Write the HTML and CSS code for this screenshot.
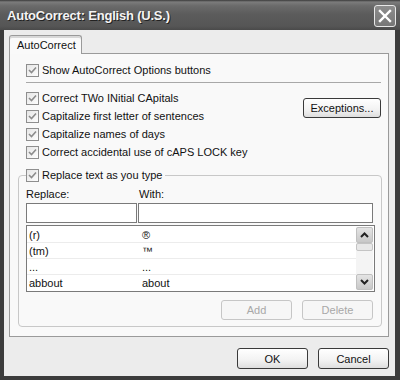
FILE: index.html
```html
<!DOCTYPE html>
<html>
<head>
<meta charset="utf-8">
<link rel="stylesheet" href="styles.css">
</head>
<body>
<div class="window">
  <div class="titlebar">
    <span class="title">AutoCorrect: English (U.S.)</span>
    <span class="close"><svg width="14" height="14" viewBox="0 0 14 14"><path d="M2 2 L12 12 M12 2 L2 12" stroke="#fff" stroke-width="2.4" stroke-linecap="square"/></svg></span>
  </div>
  <div class="client">
    <div class="tabs"><div class="tab">AutoCorrect</div></div>
    <div class="panel">
      <div class="check row1"><span class="box"><svg width="11" height="11" viewBox="0 0 11 11"><path d="M2 5 L4.5 7.5 L9 2.5" fill="none" stroke="#8c8c8c" stroke-width="1.6"/></svg></span>Show AutoCorrect Options buttons</div>
      <div class="sep"></div>
      <div class="opts">
        <div class="optlist">
          <div class="check"><span class="box"><svg width="11" height="11" viewBox="0 0 11 11"><path d="M2 5 L4.5 7.5 L9 2.5" fill="none" stroke="#8c8c8c" stroke-width="1.6"/></svg></span>Correct TWo INitial CApitals</div>
          <div class="check"><span class="box"><svg width="11" height="11" viewBox="0 0 11 11"><path d="M2 5 L4.5 7.5 L9 2.5" fill="none" stroke="#8c8c8c" stroke-width="1.6"/></svg></span>Capitalize first letter of sentences</div>
          <div class="check"><span class="box"><svg width="11" height="11" viewBox="0 0 11 11"><path d="M2 5 L4.5 7.5 L9 2.5" fill="none" stroke="#8c8c8c" stroke-width="1.6"/></svg></span>Capitalize names of days</div>
          <div class="check"><span class="box"><svg width="11" height="11" viewBox="0 0 11 11"><path d="M2 5 L4.5 7.5 L9 2.5" fill="none" stroke="#8c8c8c" stroke-width="1.6"/></svg></span>Correct accidental use of cAPS LOCK key</div>
        </div>
        <div class="btn exc">Exceptions...</div>
      </div>
      <div class="group">
        <div class="legend check"><span class="box"><svg width="11" height="11" viewBox="0 0 11 11"><path d="M2 5 L4.5 7.5 L9 2.5" fill="none" stroke="#8c8c8c" stroke-width="1.6"/></svg></span>Replace text as you type</div>
        <div class="labels"><span class="lbl-r">Replace:</span><span>With:</span></div>
        <div class="inputs"><div class="input in-r"></div><div class="input in-w"></div></div>
        <div class="list">
          <div class="rows">
            <div class="lrow"><span class="c1">(r)</span><span>®</span></div>
            <div class="lrow"><span class="c1">(tm)</span><span>™</span></div>
            <div class="lrow"><span class="c1">...</span><span>...</span></div>
            <div class="lrow"><span class="c1">abbout</span><span>about</span></div>
          </div>
          <div class="scroll">
            <div class="sbtn"><svg width="9" height="6" viewBox="0 0 9 6"><path d="M1 5 L4.5 1.5 L8 5" fill="none" stroke="#222" stroke-width="2"/></svg></div>
            <div class="thumb"></div>
            <div class="track"></div>
            <div class="sbtn"><svg width="9" height="6" viewBox="0 0 9 6"><path d="M1 1 L4.5 4.5 L8 1" fill="none" stroke="#222" stroke-width="2"/></svg></div>
          </div>
        </div>
        <div class="actions"><div class="btn dis">Add</div><div class="btn dis">Delete</div></div>
      </div>
    </div>
    <div class="footer"><div class="btn">OK</div><div class="btn">Cancel</div></div>
  </div>
</div>
</body>
</html>
```
FILE: styles.css
```css
html, body { margin: 0; padding: 0; }
body {
  background: #2b2b2b;
  font-family: "Liberation Sans", Arial, sans-serif;
  font-size: 11px;
  color: #111;
}
.window {
  width: 400px;
  height: 380px;
  background: #3c3c3c;
  display: flex;
  flex-direction: column;
}
.titlebar {
  height: 30px;
  flex: none;
  display: flex;
  align-items: center;
  justify-content: space-between;
  padding: 0 4px 0 7px;
  box-sizing: border-box;
  background: linear-gradient(#3a3a3a 0, #7c7c7c 2px, #6a6a6a 6px, #5c5c5c 14px, #565656 26px, #4a4a4a 30px);
}
.title {
  color: #f4f4f4;
  font-weight: bold;
  font-size: 13px;
  letter-spacing: -0.2px;
  text-shadow: 1px 1px 0 #222;
  margin-top: 1px;
}
.close {
  width: 20px;
  height: 20px;
  border: 1px solid #e8e8e8;
  border-radius: 3px;
  background: linear-gradient(#8d8d8d, #777);
  display: flex;
  align-items: center;
  justify-content: center;
  margin-top: 2px;
}
.client {
  flex: 1;
  margin: 0 5px 4px 4px;
  background: #ececec;
  display: flex;
  flex-direction: column;
}
.tabs {
  margin: 5px 0 0 5px;
  height: 18px;
  display: flex;
}
.tab {
  width: 73px;
  box-sizing: border-box;
  border: 1px solid #9a9a9a;
  border-bottom: none;
  border-radius: 3px 3px 0 0;
  background: #fafafa;
  padding: 3px 0 0 7px;
  position: relative;
  z-index: 1;
  margin-bottom: -1px;
  height: 19px;
  box-shadow: inset 0 2px 0 #d8d8d8;
}
.panel {
  margin-left: 5px;
  width: 380px;
  box-sizing: border-box;
  border: 1px solid #9a9a9a;
  background: #f9f9f9;
  padding: 7px 0 9px 0;
}
.check {
  display: flex;
  align-items: center;
  height: 18px;
}
.box {
  width: 13px;
  height: 13px;
  box-sizing: border-box;
  border: 1px solid #8e8e8e;
  background: linear-gradient(135deg, #e6e6e6, #fdfdfd);
  margin-right: 3px;
  display: flex;
  align-items: center;
  justify-content: center;
  flex: none;
}
.row1 { margin-left: 16px; }
.sep {
  margin: 3px 0 0 16px;
  width: 355px;
  height: 1px;
  background: #a8a8a8;
}
.opts {
  margin-top: 6px;
  display: flex;
  justify-content: space-between;
  padding: 0 7px 0 16px;
}
.btn {
  width: 71px;
  height: 20px;
  box-sizing: border-box;
  border: 1px solid #3a3a3a;
  border-radius: 3px;
  background: linear-gradient(#ffffff, #f2f2f2 60%, #dedede);
  display: flex;
  align-items: center;
  justify-content: center;
}
.exc {
  width: 78px;
  margin-top: 9px;
}
.group {
  margin: 14px 0 0 8px;
  width: 364px;
  box-sizing: border-box;
  border: 1px solid #c8c8c8;
  border-radius: 4px;
  padding: 0 8px 6px 7px;
}
.legend {
  margin-top: -10px;
  width: fit-content;
  background: #f9f9f9;
  padding: 0 3px 0 0;
}
.labels {
  margin-top: 3px;
  height: 14px;
  display: flex;
  align-items: center;
}
.lbl-r { width: 113px; }
.inputs {
  margin-top: 2px;
  display: flex;
}
.input {
  height: 20px;
  box-sizing: border-box;
  border: 1px solid #7a7a7a;
  background: #fff;
}
.in-r { width: 112px; margin-right: 1px; }
.in-w { width: 236px; }
.list {
  margin-top: 2px;
  width: 349px;
  height: 67px;
  box-sizing: border-box;
  border: 1px solid #7a7a7a;
  background: #fff;
  display: flex;
  padding: 1px 1px 1px 0;
}
.rows { flex: 1; }
.lrow {
  height: 16px;
  box-sizing: border-box;
  border-bottom: 1px solid #ececec;
  display: flex;
  align-items: center;
  padding-left: 2px;
}
.lrow:last-child { border-bottom: none; }
.c1 { width: 113px; }
.scroll {
  width: 17px;
  display: flex;
  flex-direction: column;
  background: #f4f4f4;
}
.sbtn {
  height: 16px;
  box-sizing: border-box;
  border: 1px solid #c0c0c0;
  border-radius: 2px;
  background: linear-gradient(#e4e4e4, #c8c8c8);
  display: flex;
  align-items: center;
  justify-content: center;
}
.thumb {
  height: 8px;
  box-sizing: border-box;
  border: 1px solid #c4c4c4;
  border-radius: 2px;
  background: #e8e8e8;
}
.track { flex: 1; }
.actions {
  margin-top: 8px;
  display: flex;
  justify-content: flex-end;
  gap: 10px;
}
.dis {
  border-color: #c6c6c6;
  color: #a8a8a8;
  background: #f6f6f6;
}
.footer {
  margin-top: 11px;
  display: flex;
  justify-content: flex-end;
  gap: 10px;
  padding-right: 6px;
}
.footer .btn { height: 21px; }
```
